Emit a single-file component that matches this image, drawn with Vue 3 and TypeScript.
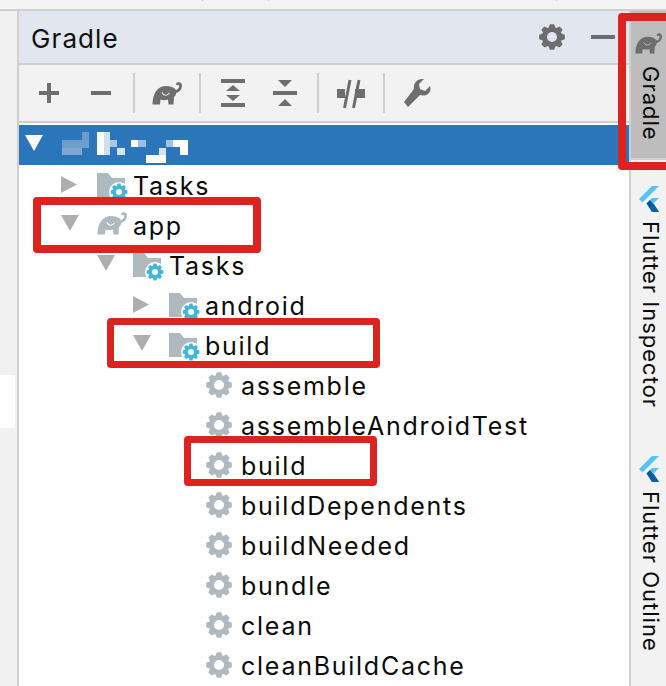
<script setup lang="ts">
function gear(cx: number, cy: number, ro: number, ri: number, hole: number): string {
  const n = 8
  const pts: string[] = []
  const step = (Math.PI * 2) / n
  for (let i = 0; i < n; i++) {
    const a = i * step - Math.PI / 2
    const offs: [number, number][] = [
      [-0.5, ri],
      [-0.24, ro],
      [0.24, ro],
      [0.5, ri]
    ]
    for (const [o, r] of offs) {
      const t = a + o * step * 0.88
      pts.push(`${(cx + r * Math.cos(t)).toFixed(2)} ${(cy + r * Math.sin(t)).toFixed(2)}`)
    }
  }
  const ring = `M${cx - hole} ${cy}a${hole} ${hole} 0 1 0 ${hole * 2} 0a${hole} ${hole} 0 1 0 ${-hole * 2} 0Z`
  return `M${pts.join('L')}Z${ring}`
}

const gearBig = gear(13, 13, 13, 10, 5)
const gearBlue = gear(22, 22, 8.5, 6.4, 3)

type Row = { label: string; level: number; arrow?: 'right' | 'down'; icon: 'folder' | 'app' | 'task' }
const rows: Row[] = [
  { label: 'Tasks', level: 0, arrow: 'right', icon: 'folder' },
  { label: 'app', level: 0, arrow: 'down', icon: 'app' },
  { label: 'Tasks', level: 1, arrow: 'down', icon: 'folder' },
  { label: 'android', level: 2, arrow: 'right', icon: 'folder' },
  { label: 'build', level: 2, arrow: 'down', icon: 'folder' },
  { label: 'assemble', level: 3, icon: 'task' },
  { label: 'assembleAndroidTest', level: 3, icon: 'task' },
  { label: 'build', level: 3, icon: 'task' },
  { label: 'buildDependents', level: 3, icon: 'task' },
  { label: 'buildNeeded', level: 3, icon: 'task' },
  { label: 'bundle', level: 3, icon: 'task' },
  { label: 'clean', level: 3, icon: 'task' },
  { label: 'cleanBuildCache', level: 3, icon: 'task' }
]

const blur: [number, number, number, number, string][] = [
  [82, 132, 7, 8, '#6b9bc9'],
  [62, 140, 27, 8, '#6f9dca'],
  [62, 148, 20, 7, '#80a8d0'],
  [97, 132, 7, 23, '#ffffff'],
  [104, 132, 6, 23, '#d0dff0'],
  [110, 140, 7, 7, '#aac5e3'],
  [117, 148, 8, 7, '#d5e3f1'],
  [131, 140, 7, 7, '#ffffff'],
  [138, 140, 8, 7, '#9fbddd'],
  [146, 155, 20, 8, '#ffffff'],
  [159, 148, 7, 7, '#d5e3f1'],
  [166, 140, 7, 7, '#a6c2e0'],
  [173, 140, 15, 7, '#ffffff'],
  [180, 147, 8, 8, '#ffffff']
]

const tabs = ['Flutter Inspector', 'Flutter Outline']
const marks = ['mark-app', 'mark-build', 'mark-task', 'mark-tab']
</script>

<template>
  <div class="page">
    <svg width="0" height="0" class="defs">
      <defs>
        <symbol id="elephant" viewBox="0 0 30 23">
          <path d="M0.500 22.500C0.500 11 6 4 14 4c4 0 8 1 10 4 1 3-.5 6-2 7l-.5 7.500h-5l-.5-5c-2.500 1-5.500 1-7.500 0l-.5 5Z" />
          <path d="M22 10c4 0 6.600-3 6.600-6.300 0-2.400-3-3-3.500-.7" fill="none" stroke="currentColor" stroke-width="2.800" />
          <path d="M10 10.500c1.500 3.500 5 3.500 7.500 .5" fill="none" stroke="var(--cut)" stroke-width="1.100" />
        </symbol>
        <symbol id="flutter" viewBox="0 0 20 26">
          <polygon points="13,0 20,0 7,13 3.500,16.500 0,13" fill="#54c5f8" />
          <polygon points="13,12 20,12 11,21 7.500,17.500" fill="#54c5f8" />
          <polygon points="7.500,17.500 11,14 20,26 13,26" fill="#01579b" />
          <polygon points="11,21 14.500,17.500 20,26 13,26" fill="#0d5fa6" />
        </symbol>
      </defs>
    </svg>

    <div class="top-strip">
      <i class="tick t1"></i><i class="tick t2"></i><i class="tick t3"></i>
    </div>

    <div class="main">
      <aside class="left-col"><div class="left-white"></div></aside>

      <section class="panel">
        <header class="head">
          <span class="title">Gradle</span>
          <svg class="head-gear" width="26" height="26" viewBox="0 0 26 26"><path :d="gearBig" fill="#6e6e6e" fill-rule="evenodd" /></svg>
          <i class="head-min"></i>
        </header>

        <div class="toolbar">
          <div class="btn"><svg width="22" height="22" viewBox="0 0 22 22"><path d="M9 1h4v8h8v4h-8v8H9v-8H1V9h8Z" fill="#6e6e6e" /></svg></div>
          <div class="btn"><svg width="22" height="22" viewBox="0 0 22 22"><rect x="1" y="9" width="20" height="4" fill="#6e6e6e" /></svg></div>
          <i class="sep"></i>
          <div class="btn"><svg class="ele" width="30" height="23"><use href="#elephant" /></svg></div>
          <i class="sep"></i>
          <div class="btn"><svg width="24" height="28" viewBox="0 0 24 28"><path d="M0 0h24v4H0ZM0 24h24v4H0ZM12 6l7 6H5ZM5 16h14l-7 6Z" fill="#6e6e6e" /></svg></div>
          <div class="btn"><svg width="24" height="26" viewBox="0 0 24 26"><path d="M5 0h14l-7 7ZM0 11h24v4H0ZM12 19l7 7H5Z" fill="#6e6e6e" /></svg></div>
          <i class="sep"></i>
          <div class="btn"><svg width="28" height="29" viewBox="0 0 28 29"><path d="M0 10h8v9H0ZM18 10h10v9H18Z" fill="#6e6e6e" /><path d="M7.500 29L13 1M16.500 29L22 1" stroke="#6e6e6e" stroke-width="3" fill="none" /></svg></div>
          <i class="sep"></i>
          <div class="btn"><svg width="28" height="28" viewBox="0 0 28 28"><path d="M27 7l-5 5-5-2-1-5 5-5C15-1 10 4 11 10L1 23l4 5L17 16c7 2 12-3 10-9Z" fill="#6e6e6e" /></svg></div>
        </div>

        <div class="tree">
          <div class="root-row">
            <svg class="root-arrow" width="18" height="16" viewBox="0 0 18 16"><path d="M0 0h18L9 16Z" fill="#fff" /></svg>
            <svg class="blur" width="126" height="31" viewBox="62 132 126 31"><rect v-for="(b, i) in blur" :key="i" :x="b[0]" :y="b[1]" :width="b[2]" :height="b[3]" :fill="b[4]" /></svg>
          </div>

          <div v-for="(r, i) in rows" :key="i" class="row" :style="{ paddingLeft: 42 + r.level * 36 + 'px' }">
            <span class="arrow-cell">
              <svg v-if="r.arrow === 'right'" class="arrow-r" width="16" height="17" viewBox="0 0 16 17"><path d="M0 0l16 8.500L0 17Z" fill="#aeaeae" /></svg>
              <svg v-else-if="r.arrow === 'down'" class="arrow-d" width="18" height="16" viewBox="0 0 18 16"><path d="M0 0h18L9 16Z" fill="#aeaeae" /></svg>
            </span>
            <span class="icon-cell">
              <svg v-if="r.icon === 'folder'" class="ic-folder" width="32" height="30" viewBox="0 0 32 30">
                <path d="M0 3h11l4 5h13v19H0Z" fill="#aeb9c0" />
                <circle cx="22" cy="22" r="10" fill="#fff" />
                <path :d="gearBlue" fill="#40b6e0" fill-rule="evenodd" />
              </svg>
              <svg v-else-if="r.icon === 'app'" class="ic-app" width="30" height="23"><use href="#elephant" /></svg>
              <svg v-else class="ic-task" width="26" height="26" viewBox="0 0 26 26"><path :d="gearBig" fill="#afb9c0" fill-rule="evenodd" /></svg>
            </span>
            <span class="label">{{ r.label }}</span>
          </div>
        </div>
      </section>

      <aside class="side">
        <div class="tab tab-active">
          <svg class="ele side-ele" width="27" height="21"><use href="#elephant" /></svg>
          <span class="v-text">Gradle</span>
        </div>
        <div v-for="t in tabs" :key="t" class="tab">
          <svg width="20" height="26"><use href="#flutter" /></svg>
          <span class="v-text">{{ t }}</span>
        </div>
      </aside>
    </div>

    <i v-for="m in marks" :key="m" class="mark" :class="m"></i>
  </div>
</template>

<style>
html,
body {
  margin: 0;
  background: #fff;
}
</style>

<style scoped>
.page {
  position: relative;
  width: 666px;
  height: 686px;
  overflow: hidden;
  font-family: Inter, "Liberation Sans", sans-serif;
  color: #000;
  --cut: #fff;
}
.defs {
  position: absolute;
}
.top-strip {
  display: flex;
  height: 9px;
  background: #f4f4f4;
  border-bottom: 2px solid #cfcfcf;
}
.tick {
  width: 1px;
  height: 1px;
  background: #c8c8c8;
}
.t1 { margin-left: 202px; }
.t2 { margin-left: 65px; }
.t3 { margin-left: 287px; }
.main {
  display: flex;
  height: 675px;
}
.left-col {
  width: 17px;
  background: #f1f1f1;
  border-right: 2px solid #cfcfcf;
  flex: none;
}
.left-white {
  width: 15px;
  height: 53px;
  margin-top: 364px;
  background: #fff;
}
.panel {
  width: 610px;
  flex: none;
  display: flex;
  flex-direction: column;
}
.head {
  height: 52px;
  background: #e2e6ee;
  border-bottom: 2px solid #cfcfcf;
  display: flex;
  align-items: center;
  padding-left: 12px;
}
.title {
  font-size: 26px;
  letter-spacing: 1.1px;
  color: #111;
  margin-top: 2px;
}
.head-gear {
  margin-left: auto;
}
.head-min {
  width: 24px;
  height: 4px;
  margin: 0 14px 0 26px;
  background: #6e6e6e;
}
.toolbar {
  height: 56px;
  background: #f2f2f2;
  border-bottom: 2px solid #cfcfcf;
  display: flex;
  align-items: center;
  padding-left: 4px;
}
.btn {
  width: 52px;
  display: flex;
  align-items: center;
  justify-content: center;
}
.btn svg {
  display: block;
}
.sep {
  width: 2px;
  height: 40px;
  margin: 0 6px;
  background: #cfcfcf;
}
.ele {
  fill: #6e6e6e;
  color: #6e6e6e;
  --cut: #f2f2f2;
}
.tree {
  padding-top: 2px;
  background: #fff;
  flex: 1;
}
.root-row {
  height: 40px;
  background: #2b76bb;
  display: flex;
  align-items: center;
  padding-left: 6px;
}
.root-arrow {
  margin: -5px 19px 0 0;
}
.blur {
  margin-top: 5px;
}
.row {
  height: 40px;
  display: flex;
  align-items: center;
}
.arrow-cell {
  width: 36px;
  flex: none;
  display: flex;
}
.arrow-r {
  margin-top: -1px;
}
.arrow-d {
  margin-top: -5px;
}
.icon-cell {
  width: 36px;
  flex: none;
  display: flex;
  align-items: center;
}
.ic-folder {
  overflow: visible;
}
.ic-app {
  fill: #aeb9c0;
  color: #aeb9c0;
  --cut: #fff;
  margin-top: -3px;
}
.ic-task {
  margin-left: 1px;
}
.label {
  font-size: 25px;
  letter-spacing: 1.74px;
  white-space: nowrap;
  color: #0a0a0a;
  margin-top: 2px;
}
.side {
  flex: 1;
  background: #f2f2f2;
  border-left: 2px solid #cfcfcf;
  display: flex;
  flex-direction: column;
  align-items: center;
  min-width: 0;
}
.tab {
  width: 100%;
  display: flex;
  flex-direction: column;
  align-items: center;
  gap: 9px;
  padding-top: 26px;
}
.tab:nth-child(3) {
  padding-top: 48px;
}
.tab-active {
  height: 149px;
  box-sizing: border-box;
  background: #bdbdbd;
  padding-top: 22px;
  gap: 12px;
  border-bottom: 2px solid #cfcfcf;
}
.side-ele {
  --cut: #bdbdbd;
}
.v-text {
  writing-mode: vertical-rl;
  font-size: 22px;
  letter-spacing: 1px;
  line-height: 26px;
  white-space: nowrap;
  color: #0a0a0a;
  margin-left: 4px;
}
.mark {
  position: absolute;
  box-sizing: border-box;
  border: 8px solid #dc231f;
  border-radius: 4px;
  pointer-events: none;
}
.mark-app { left: 33px; top: 197px; width: 228px; height: 56px; }
.mark-build { left: 107px; top: 318px; width: 273px; height: 50px; border-width: 7px; }
.mark-task { left: 184px; top: 436px; width: 193px; height: 50px; border-width: 7px; }
.mark-tab { left: 618px; top: 13px; width: 60px; height: 157px; }
</style>
